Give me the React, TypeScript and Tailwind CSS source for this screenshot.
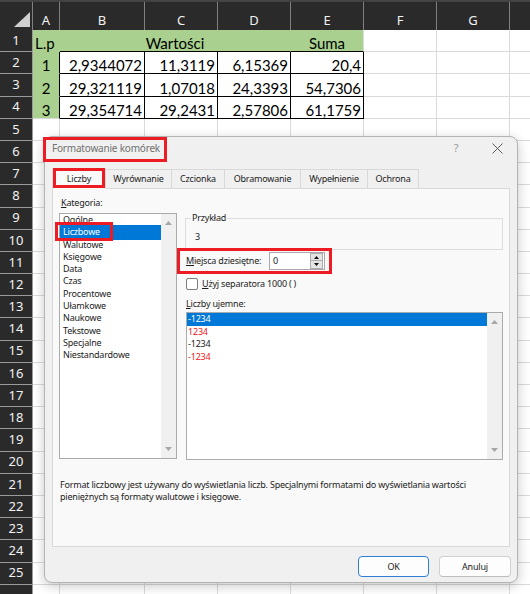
import React from "react";

const colW = [
  "w-[27px]",
  "w-[85px]",
  "w-[73px]",
  "w-[73px]",
  "w-[73px]",
  "w-[73px]",
  "w-[73px]",
  "w-[80px]",
];
const letters = ["A", "B", "C", "D", "E", "F", "G", ""];

const data: Record<number, string[]> = {
  2: ["1", "2,9344072", "11,3119", "6,15369", "20,4"],
  3: ["2", "29,321119", "1,07018", "24,3393", "54,7306"],
  4: ["3", "29,354714", "29,2431", "2,57806", "61,1759"],
};

function RowHead({ r }: { r: number }) {
  return (
    <div className="w-[33px] shrink-0 bg-[#2a2a2a] border-r border-b border-[#9a9a9a] flex items-center justify-center text-[13px] text-[#f2f2f2] font-['Noto_Sans',sans-serif]">
      {r < 26 ? r : ""}
    </div>
  );
}

function GridCell({ i }: { i: number }) {
  return <div className={`${colW[i]} shrink-0 border-r border-b border-[#dadada]`} />;
}

function Row({ r }: { r: number }) {
  if (r === 1) {
    return (
      <div className="flex h-[22.2px] shrink-0">
        <RowHead r={r} />
        <div className="w-[27px] shrink-0 bg-[#a9d08e] border-r border-b border-[#a9d08e] flex items-end pl-[2px] leading-[16px]">
          L.p
        </div>
        <div className="w-[231px] shrink-0 bg-[#a9d08e] border-r border-b border-[#a9d08e] border-b-black flex items-end justify-center leading-[16px]">
          Wartości
        </div>
        <div className="w-[73px] shrink-0 bg-[#a9d08e] border-r border-b border-[#dadada] border-b-black flex items-end justify-center leading-[16px]">
          Suma
        </div>
        <GridCell i={5} />
        <GridCell i={6} />
        <GridCell i={7} />
      </div>
    );
  }
  if (data[r]) {
    const d = data[r];
    return (
      <div className="flex h-[22.2px] shrink-0">
        <RowHead r={r} />
        <div
          className={
            r === 4
              ? "w-[27px] shrink-0 bg-[#a9d08e] border-r border-b border-[#dadada] border-r-black flex items-end justify-center leading-[16px]"
              : "w-[27px] shrink-0 bg-[#a9d08e] border-r border-b border-[#a9d08e] border-r-black flex items-end justify-center leading-[16px]"
          }
        >
          {d[0]}
        </div>
        {d.slice(1).map((v, k) => (
          <div
            key={k}
            className={`${colW[k + 1]} shrink-0 bg-white border-r border-b border-black flex items-end justify-end pr-[2px] leading-[16px]`}
          >
            {v}
          </div>
        ))}
        <GridCell i={5} />
        <GridCell i={6} />
        <GridCell i={7} />
      </div>
    );
  }
  return (
    <div className="flex h-[22.2px] shrink-0">
      <RowHead r={r} />
      {letters.map((_, i) => (
        <GridCell key={i} i={i} />
      ))}
    </div>
  );
}

function Sheet() {
  const rows = Array.from({ length: 26 }, (_, i) => i + 1);
  return (
    <div className="flex flex-col font-['Lato',sans-serif] text-[15px] text-black">
      <div className="flex h-[30px] shrink-0 bg-[#2a2a2a] border-t-2 border-[#444444]">
        <div className="w-[33px] shrink-0 flex items-end justify-end pr-[2px] pb-[3px] border-r border-[#808080]">
          <svg width="16" height="15" viewBox="0 0 16 15">
            <polygon points="16,0 16,15 0,15" fill="#cfcfcf" />
          </svg>
        </div>
        {letters.map((l, i) => (
          <div
            key={i}
            className={`${colW[i]} shrink-0 border-r border-[#808080] flex items-end justify-center pb-[2px] leading-[16px] text-[13px] text-[#f2f2f2] font-['Noto_Sans',sans-serif]`}
          >
            {l}
          </div>
        ))}
      </div>
      {rows.map((r) => (
        <Row key={r} r={r} />
      ))}
    </div>
  );
}

function Tri({ down }: { down?: boolean }) {
  return (
    <svg width="7" height="4" viewBox="0 0 7 4">
      <polygon points={down ? "0,0 7,0 3.5,4" : "0,4 7,4 3.5,0"} fill="#a6a6a6" />
    </svg>
  );
}

function Scrollbar() {
  return (
    <div className="w-[15px] shrink-0 bg-[#f0f0f0] flex flex-col items-center justify-between pt-[7px] pb-[7px]">
      <Tri />
      <Tri down />
    </div>
  );
}

const catItems = [
  "Ogólne",
  "Liczbowe",
  "Walutowe",
  "Księgowe",
  "Data",
  "Czas",
  "Procentowe",
  "Ułamkowe",
  "Naukowe",
  "Tekstowe",
  "Specjalne",
  "Niestandardowe",
];

const tabs = [
  { t: "Liczby", w: "w-[54px]" },
  { t: "Wyrównanie", w: "w-[67px]" },
  { t: "Czcionka", w: "w-[54px]" },
  { t: "Obramowanie", w: "w-[77px]" },
  { t: "Wypełnienie", w: "w-[68px]" },
  { t: "Ochrona", w: "w-[52px]" },
];

function Dialog() {
  return (
    <div className="absolute left-[44px] top-[136px] w-[474px] h-[447px] rounded-[8px] border border-[#b3b3b3] bg-[#f0f0f0] shadow-[0_3px_12px_rgba(0,0,0,0.22)] font-['Noto_Sans',sans-serif] text-[9px] tracking-[-0.2px] text-[#1c1c1c] flex flex-col">
      {/* title bar */}
      <div className="flex items-center h-[22px] shrink-0 pl-[7px]">
        <span className="text-[10px] text-[#707070]">Formatowanie komórek</span>
        <div className="ml-auto flex items-center pr-[10px]">
          <span className="w-[20px] text-center text-[11px] text-[#9a9a9a]">?</span>
          <span className="ml-[21px] w-[20px] flex justify-center">
            <svg width="11" height="11" viewBox="0 0 11 11">
              <path d="M0.5 0.5 L10.5 10.5 M10.5 0.5 L0.5 10.5" stroke="#5c5c5c" strokeWidth="1" />
            </svg>
          </span>
        </div>
      </div>

      {/* tabs */}
      <div className="relative z-10 flex items-start h-[19px] mt-[10px] ml-[7px] shrink-0">
        {tabs.map((tb, i) => (
          <div
            key={tb.t}
            className={
              i === 0
                ? `${tb.w} h-[20px] bg-[#f9f9f9] border-l border-t border-r border-[#d9d9d9] flex items-center justify-center pb-[1px]`
                : `${tb.w} -ml-px h-[19px] bg-[#f0f0f0] border-l border-t border-r border-[#d9d9d9] flex items-center justify-center`
            }
          >
            {tb.t}
          </div>
        ))}
      </div>

      {/* panel */}
      <div className="mx-[7px] h-[359px] shrink-0 border border-[#d9d9d9] bg-[#f9f9f9] flex flex-col">
        <div className="flex gap-[8px] px-[6px] pt-[8px]">
          {/* left */}
          <div className="w-[118px] shrink-0 flex flex-col">
            <div className="h-[12px] leading-[12px] pl-[2px]">
              <span className="underline underline-offset-[1px]">K</span>ategoria:
            </div>
            <div className="mt-[4px] h-[246px] border border-[#ababab] bg-white flex">
              <div className="flex-1 flex flex-col">
                {catItems.map((t, i) =>
                  i === 1 ? (
                    <div key={t} className="relative h-[12.3px]">
                      <div className="absolute z-10 left-0 right-0 -top-[1.4px] -bottom-[1.6px] bg-[#0078d7]" />
                      <div className="relative z-20 pl-[3px] leading-[12.3px] text-white">{t}</div>
                    </div>
                  ) : (
                    <div key={t} className="h-[12.3px] leading-[12.3px] pl-[3px]">
                      {t}
                    </div>
                  )
                )}
              </div>
              <Scrollbar />
            </div>
          </div>

          {/* right */}
          <div className="flex-1 flex flex-col">
            <div className="mt-[21px] border border-[#dcdcdc] pb-[6px]">
              <div className="-mt-[7px] ml-[5px] w-fit px-[1px] bg-[#f9f9f9] leading-[12px]">Przykład</div>
              <div className="mt-[7px] pl-[9px] leading-[12px]">3</div>
            </div>

            <div className="mt-[2px] h-[18px] flex items-center">
              <span className="w-[84px] shrink-0 pl-[1px]">
                <span className="underline underline-offset-[1px]">M</span>iejsca dziesiętne:
              </span>
              <div className="w-[56px] h-[18px] border border-[#a9a9a9] bg-white flex">
                <span className="pl-[3px] leading-[16px]">0</span>
                <div className="ml-auto mr-[1px] w-[13px] flex flex-col">
                  <div className="h-[8px] bg-[#e5e5e5] border border-[#adadad] flex items-center justify-center">
                    <svg width="5" height="3" viewBox="0 0 5 3">
                      <polygon points="0,3 5,3 2.5,0" fill="#111" />
                    </svg>
                  </div>
                  <div className="h-[8px] bg-[#e5e5e5] border border-t-0 border-[#adadad] flex items-center justify-center">
                    <svg width="5" height="3" viewBox="0 0 5 3">
                      <polygon points="0,0 5,0 2.5,3" fill="#111" />
                    </svg>
                  </div>
                </div>
              </div>
            </div>

            <div className="mt-[8px] h-[12px] flex items-center pl-[1px]">
              <div className="w-[12px] h-[12px] rounded-[2px] border border-[#7d7d7d] bg-white" />
              <span className="ml-[4px]">
                <span className="underline underline-offset-[1px]">U</span>żyj separatora 1000 ( )
              </span>
            </div>

            <div className="mt-[8px] h-[12px] leading-[12px] pl-[1px]">
              <span className="underline underline-offset-[1px]">L</span>iczby ujemne:
            </div>

            <div className="mt-[2px] ml-[1px] h-[148px] border border-[#ababab] bg-white flex">
              <div className="flex-1 flex flex-col">
                <div className="h-[12.5px] leading-[12.5px] pl-[1px] bg-[#0078d7] text-white">-1234</div>
                <div className="h-[12.5px] leading-[12.5px] pl-[1px] text-[#f01818]">1234</div>
                <div className="h-[12.5px] leading-[12.5px] pl-[1px]">-1234</div>
                <div className="h-[12.5px] leading-[12.5px] pl-[1px] text-[#f01818]">-1234</div>
              </div>
              <Scrollbar />
            </div>
          </div>
        </div>

        <div className="mt-[19px] pl-[7px] leading-[12px] text-[#222]">
          Format liczbowy jest używany do wyświetlania liczb. Specjalnymi formatami do wyświetlania wartości
          <br />
          pieniężnych są formaty walutowe i księgowe.
        </div>
      </div>

      {/* footer */}
      <div className="flex justify-end gap-[10px] pr-[6px] mt-[9px]">
        <div className="w-[71px] h-[21px] rounded-[4px] border border-[#2f7fd4] bg-[#fdfdfd] flex items-center justify-center">
          OK
        </div>
        <div className="w-[72px] h-[21px] rounded-[4px] border border-[#d0d0d0] border-b-[#bdbdbd] bg-[#fdfdfd] flex items-center justify-center">
          Anuluj
        </div>
      </div>

      {/* annotation boxes */}
      <div className="absolute left-[-2px] top-[0px] w-[124px] h-[25px] border-[3px] border-[#ed1c24]" />
      <div className="absolute z-20 left-[8px] top-[31px] w-[52px] h-[20px] border-[3px] border-[#ed1c24]" />
      <div className="absolute z-30 left-[10px] top-[85px] w-[58px] h-[19px] border-[3px] border-[#ed1c24]" />
      <div className="absolute left-[132px] top-[111px] w-[155px] h-[26px] border-[3px] border-[#ed1c24]" />
    </div>
  );
}

export default function App() {
  return (
    <div className="relative w-[530px] h-[594px] overflow-hidden bg-white">
      <Sheet />
      <Dialog />
    </div>
  );
}
